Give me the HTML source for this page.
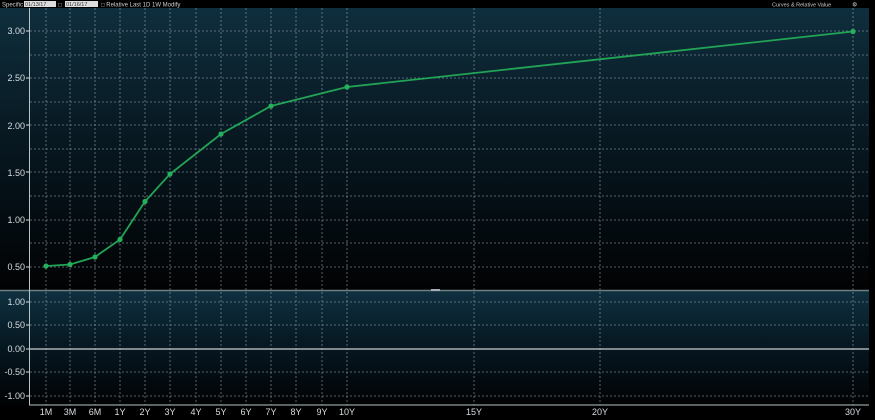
<!DOCTYPE html>
<html><head><meta charset="utf-8"><style>
html,body{margin:0;padding:0;background:#000;width:875px;height:420px;overflow:hidden}
svg{display:block}
</style></head><body>
<svg width="875" height="420" xmlns="http://www.w3.org/2000/svg" font-family="Liberation Sans, sans-serif">
<defs>
<linearGradient id="g1" x1="0" y1="0" x2="0" y2="1">
<stop offset="0" stop-color="#0f2e3d"/><stop offset="0.55" stop-color="#06141c"/><stop offset="1" stop-color="#010203"/>
</linearGradient>
<linearGradient id="g2" x1="0" y1="0" x2="0" y2="1">
<stop offset="0" stop-color="#0f3040"/><stop offset="0.5" stop-color="#061720"/><stop offset="1" stop-color="#010203"/>
</linearGradient>
</defs>
<rect width="875" height="420" fill="#000"/>
<rect x="0" y="8" width="869" height="282" fill="url(#g1)"/>
<rect x="0" y="291" width="869" height="114" fill="url(#g2)"/>
<!-- top bar -->
<text x="2" y="6.5" font-size="6" fill="#ccc">Specific</text>
<rect x="24" y="1" width="32" height="6" fill="#ddd"/>
<text x="25" y="6" font-size="5.5" fill="#333">01/13/17</text>
<text x="58" y="6.5" font-size="6" fill="#ccc">□</text>
<rect x="65" y="1" width="33" height="6" fill="#ddd"/>
<text x="66" y="6" font-size="5.5" fill="#333">01/16/17</text>
<text x="101" y="6.5" font-size="6" fill="#ccc">□  Relative   Last   1D   1W   Modify</text>
<text x="772" y="6.5" font-size="5.5" fill="#ccc">Curves &amp; Relative Value</text>
<text x="852" y="6.5" font-size="6" fill="#ccc">⚙</text>
<!-- grids -->
<g stroke="#8fa4ad" stroke-width="0.8" stroke-dasharray="2,2" opacity="0.75">
<line x1="30" x2="869" y1="31" y2="31"/><line x1="30" x2="869" y1="55" y2="55"/>
<line x1="30" x2="869" y1="78" y2="78"/><line x1="30" x2="869" y1="102" y2="102"/>
<line x1="30" x2="869" y1="125" y2="125"/><line x1="30" x2="869" y1="149" y2="149"/>
<line x1="30" x2="869" y1="172" y2="172"/><line x1="30" x2="869" y1="196" y2="196"/>
<line x1="30" x2="869" y1="220" y2="220"/><line x1="30" x2="869" y1="243" y2="243"/>
<line x1="30" x2="869" y1="267" y2="267"/>
<line x1="30" x2="869" y1="302" y2="302"/><line x1="30" x2="869" y1="325" y2="325"/>
<line x1="30" x2="869" y1="372" y2="372"/><line x1="30" x2="869" y1="396" y2="396"/>
<g id="v">
<line y1="8" y2="405" x1="46" x2="46"/><line y1="8" y2="405" x1="70" x2="70"/>
<line y1="8" y2="405" x1="95" x2="95"/><line y1="8" y2="405" x1="120" x2="120"/>
<line y1="8" y2="405" x1="145" x2="145"/><line y1="8" y2="405" x1="170" x2="170"/>
<line y1="8" y2="405" x1="196" x2="196"/><line y1="8" y2="405" x1="221" x2="221"/>
<line y1="8" y2="405" x1="246" x2="246"/><line y1="8" y2="405" x1="271" x2="271"/>
<line y1="8" y2="405" x1="296" x2="296"/><line y1="8" y2="405" x1="322" x2="322"/>
<line y1="8" y2="405" x1="347" x2="347"/><line y1="8" y2="405" x1="474" x2="474"/>
<line y1="8" y2="405" x1="600" x2="600"/><line y1="8" y2="405" x1="853" x2="853"/>
</g>
</g>
<line x1="0" x2="869" y1="290.5" y2="290.5" stroke="#6f7f82" stroke-width="1.5"/>
<rect x="431" y="289" width="9" height="2" fill="#aab"/>
<line x1="30" x2="869" y1="349" y2="349" stroke="#c8cdd0" stroke-width="1.2"/>
<line x1="29.5" x2="29.5" y1="8" y2="405" stroke="#b8c4c8" stroke-width="1"/>
<line x1="29" x2="869" y1="405" y2="405" stroke="#b8c4c8" stroke-width="1"/>
<!-- y labels -->
<g font-size="9" fill="#d8dde0" text-anchor="end">
<text x="25" y="34">3.00</text><text x="25" y="81">2.50</text><text x="25" y="129">2.00</text>
<text x="25" y="176">1.50</text><text x="25" y="223">1.00</text><text x="25" y="270">0.50</text>
<text x="25" y="305">1.00</text><text x="25" y="328">0.50</text><text x="25" y="352">0.00</text>
<text x="25" y="375">-0.50</text><text x="25" y="399">-1.00</text>
</g>
<g stroke="#d8dde0" stroke-width="1">
<line x1="26" x2="29" y1="31" y2="31"/><line x1="26" x2="29" y1="78" y2="78"/><line x1="26" x2="29" y1="125" y2="125"/>
<line x1="26" x2="29" y1="172" y2="172"/><line x1="26" x2="29" y1="220" y2="220"/><line x1="26" x2="29" y1="267" y2="267"/>
<line x1="26" x2="29" y1="302" y2="302"/><line x1="26" x2="29" y1="325" y2="325"/><line x1="26" x2="29" y1="349" y2="349"/>
<line x1="26" x2="29" y1="372" y2="372"/><line x1="26" x2="29" y1="396" y2="396"/>
</g>
<!-- x labels -->
<g font-size="9" fill="#d8dde0" text-anchor="middle">
<text x="46" y="415">1M</text><text x="70" y="415">3M</text><text x="95" y="415">6M</text>
<text x="120" y="415">1Y</text><text x="145" y="415">2Y</text><text x="170" y="415">3Y</text>
<text x="196" y="415">4Y</text><text x="221" y="415">5Y</text><text x="246" y="415">6Y</text>
<text x="271" y="415">7Y</text><text x="296" y="415">8Y</text><text x="322" y="415">9Y</text>
<text x="347" y="415">10Y</text><text x="474" y="415">15Y</text><text x="600" y="415">20Y</text>
<text x="853" y="415">30Y</text>
</g>
<!-- curve -->
<polyline fill="none" stroke="#22a456" stroke-width="1.8" points="46,266 70,264.5 95,257 120,239.5 145,201.5 170,174 221,134 271,106 347,87 853,31.5"/>
<g fill="#25b05c">
<circle cx="46" cy="266" r="2.6"/><circle cx="70" cy="264.5" r="2.6"/><circle cx="95" cy="257" r="2.6"/>
<circle cx="120" cy="239.5" r="2.6"/><circle cx="145" cy="201.5" r="2.6"/><circle cx="170" cy="174" r="2.6"/>
<circle cx="221" cy="134" r="2.6"/><circle cx="271" cy="106" r="2.6"/><circle cx="347" cy="87" r="2.6"/>
<circle cx="853" cy="31.5" r="2.6"/>
</g>
</svg>
</body></html>
